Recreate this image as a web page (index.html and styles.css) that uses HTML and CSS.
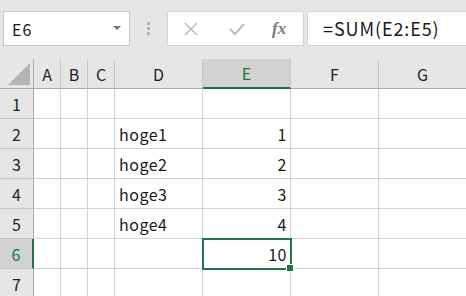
FILE: index.html
```html
<!DOCTYPE html>
<html>
<head>
	<title>Sheet</title>
	<meta charset="utf-8">
	<link rel="stylesheet" href="styles.css">
</head>
<body>

	<div class="toolbar">
		<div class="nameBox">
			<span>E6</span>
			<span class="dropArrow"></span>
		</div>
		<div class="dots"><i></i><i></i><i></i></div>
		<div class="fxButtons">
			<svg width="16" height="14" viewBox="0 0 16 14"><path d="M2 1 L14 13 M14 1 L2 13" stroke="#bcbcbc" stroke-width="1.6" fill="none"/></svg>
			<svg width="16" height="14" viewBox="0 0 16 14"><path d="M1 7 L6 12 L15 2" stroke="#bcbcbc" stroke-width="2.2" fill="none"/></svg>
			<span class="fx">fx</span>
		</div>
		<div class="formula">=SUM(E2:E5)</div>
	</div>

	<div class="grid">
		<div class="corner"><span class="tri"></span></div>
		<div class="colHead">A</div>
		<div class="colHead">B</div>
		<div class="colHead">C</div>
		<div class="colHead">D</div>
		<div class="colHead --active">E</div>
		<div class="colHead">F</div>
		<div class="colHead">G</div>

		<div class="rowHead">1</div>
		<div class="cell"></div><div class="cell"></div><div class="cell"></div>
		<div class="cell"></div><div class="cell"></div><div class="cell"></div><div class="cell"></div>

		<div class="rowHead">2</div>
		<div class="cell"></div><div class="cell"></div><div class="cell"></div>
		<div class="cell">hoge1</div><div class="cell --num">1</div><div class="cell"></div><div class="cell"></div>

		<div class="rowHead">3</div>
		<div class="cell"></div><div class="cell"></div><div class="cell"></div>
		<div class="cell">hoge2</div><div class="cell --num">2</div><div class="cell"></div><div class="cell"></div>

		<div class="rowHead">4</div>
		<div class="cell"></div><div class="cell"></div><div class="cell"></div>
		<div class="cell">hoge3</div><div class="cell --num">3</div><div class="cell"></div><div class="cell"></div>

		<div class="rowHead">5</div>
		<div class="cell"></div><div class="cell"></div><div class="cell"></div>
		<div class="cell">hoge4</div><div class="cell --num">4</div><div class="cell"></div><div class="cell"></div>

		<div class="rowHead --active">6</div>
		<div class="cell"></div><div class="cell"></div><div class="cell"></div>
		<div class="cell"></div><div class="cell --num --selected">10<span class="handle"></span></div><div class="cell"></div><div class="cell"></div>

		<div class="rowHead">7</div>
		<div class="cell"></div><div class="cell"></div><div class="cell"></div>
		<div class="cell"></div><div class="cell"></div><div class="cell"></div><div class="cell"></div>
	</div>

</body>
</html>
```

FILE: styles.css
```css
body {
	margin: 0;
	width: 466px;
	height: 296px;
	overflow: hidden;
	background: #fff;
	font-family: "Noto Sans CJK JP", "Liberation Sans", sans-serif;
	color: #1a1a1a;
}

/* top bar with name box and formula */

.toolbar {
	height: 59px;
	background: #e6e6e6;
	display: flex;
	align-items: flex-start;
	padding-top: 11px;
	box-sizing: border-box;
}

.nameBox {
	margin-left: 3px;
	width: 127px;
	height: 35px;
	box-sizing: border-box;
	background: #fff;
	border: 1px solid #c6c6c6;
	display: flex;
	align-items: center;
	justify-content: space-between;
	padding: 0 8px 0 8px;
	font-size: 16px;
	letter-spacing: 1px;
}

.dropArrow {
	width: 0;
	height: 0;
	border-left: 4px solid transparent;
	border-right: 4px solid transparent;
	border-top: 4px solid #777;
	margin-top: -2px;
}

.dots {
	width: 37px;
	height: 35px;
	display: flex;
	flex-direction: column;
	align-items: center;
	justify-content: center;
	gap: 2px;
}

.dots i {
	width: 3px;
	height: 3px;
	background: #b4b4b4;
}

.fxButtons {
	width: 137px;
	height: 35px;
	box-sizing: border-box;
	background: #fff;
	border: 1px solid #d4d4d4;
	display: flex;
	align-items: center;
	padding-left: 15px;
	gap: 30px;
}

.fx {
	font-family: "Liberation Serif", serif;
	font-style: italic;
	font-weight: bold;
	font-size: 17px;
	color: #7a7a7a;
	margin-left: -3px;
}

.formula {
	margin-left: 3px;
	flex: 1;
	height: 35px;
	box-sizing: border-box;
	background: #fff;
	border: 1px solid #d4d4d4;
	border-right: none;
	padding-left: 15px;
	font-size: 18px;
	letter-spacing: 0.9px;
	line-height: 33px;
}

/* sheet grid */

.grid {
	display: grid;
	grid-template-columns: 34px 27px 27px 27px 88px 88px 88px 88px;
	grid-auto-rows: 30px;
}

.corner,
.colHead,
.rowHead {
	background: #e6e6e6;
	box-sizing: border-box;
	display: flex;
	align-items: center;
	justify-content: center;
	font-size: 16px;
	color: #222;
}

.corner {
	border-right: 1px solid #ababab;
	border-bottom: 1px solid #ababab;
	position: relative;
}

.tri {
	position: absolute;
	right: 3px;
	bottom: 3px;
	width: 0;
	height: 0;
	border-left: 22px solid transparent;
	border-bottom: 22px solid #b4b4b4;
}

.colHead {
	border-right: 1px solid #c6c6c6;
	border-bottom: 1px solid #ababab;
}

.rowHead {
	border-right: 1px solid #ababab;
	border-bottom: 1px solid #c6c6c6;
}

.colHead.--active {
	background: #d2d2d2;
	color: #217346;
	border-bottom: 2px solid #217346;
}

.rowHead.--active {
	background: #d2d2d2;
	color: #217346;
	border-right: 2px solid #217346;
}

.cell {
	box-sizing: border-box;
	border-right: 1px solid #d4d4d4;
	border-bottom: 1px solid #d4d4d4;
	font-size: 16px;
	letter-spacing: 0.5px;
	display: flex;
	align-items: center;
	padding: 0 4px;
}

.--num {
	justify-content: flex-end;
	padding-right: 3px;
}

.--selected {
	position: relative;
	outline: 2px solid #217346;
	outline-offset: -1px;
	z-index: 1;
}

.handle {
	position: absolute;
	right: -4px;
	bottom: -4px;
	width: 6px;
	height: 6px;
	background: #217346;
	border: 1px solid #fff;
}
```
